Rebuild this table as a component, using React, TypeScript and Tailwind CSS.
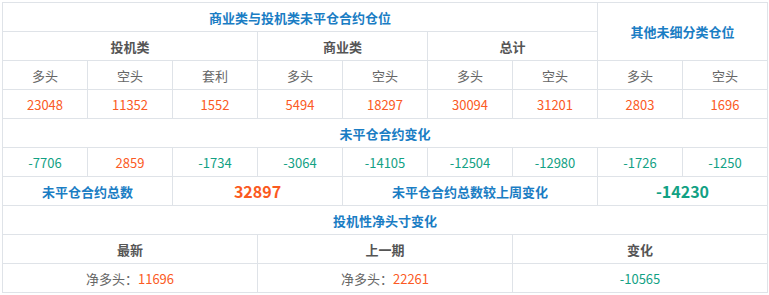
import React from "react";

const font = { fontFamily: '"Microsoft YaHei", "Noto Sans CJK SC", "Noto Sans", sans-serif' };

function Cell({ className = "", children }: { className?: string; children?: React.ReactNode }) {
  return (
    <div className={`flex items-center justify-center bg-white text-[13px] leading-none ${className}`}>
      {children}
    </div>
  );
}

const HEAD = "bg-[#f5f8fd]";
const BLUE = "text-[#1a7dc4] font-bold";
const GRAY_B = "text-[#555] font-bold";
const GRAY = "text-[#666]";
const RED = "text-[#fb5a24]";
const GREEN = "text-[#12a184]";

export default function App() {
  const sub = ["多头", "空头", "套利", "多头", "空头", "多头", "空头", "多头", "空头"];
  const vals = ["23048", "11352", "1552", "5494", "18297", "30094", "31201", "2803", "1696"];
  const chg = ["-7706", "2859", "-1734", "-3064", "-14105", "-12504", "-12980", "-1726", "-1250"];
  return (
    <div className="bg-white w-[769px] h-[295px] pl-[2px] pt-[2px]" style={font}>
      <div className="grid grid-cols-[repeat(9,84px)] grid-rows-[repeat(10,28px)] gap-px bg-[#dfe3e8] border border-[#dfe3e8] w-[766px]">
        <Cell className={`col-span-7 ${HEAD} ${BLUE}`}>商业类与投机类未平仓合约仓位</Cell>
        <Cell className={`col-span-2 row-span-2 ${HEAD} ${BLUE}`}>其他未细分类仓位</Cell>
        <Cell className={`col-span-3 ${HEAD} ${GRAY_B}`}>投机类</Cell>
        <Cell className={`col-span-2 ${HEAD} ${GRAY_B}`}>商业类</Cell>
        <Cell className={`col-span-2 ${HEAD} ${GRAY_B}`}>总计</Cell>
        {sub.map((s, i) => (
          <Cell key={"s" + i} className={GRAY}>{s}</Cell>
        ))}
        {vals.map((v, i) => (
          <Cell key={"v" + i} className={RED}>{v}</Cell>
        ))}
        <Cell className={`col-span-9 ${HEAD} ${BLUE}`}>未平仓合约变化</Cell>
        {chg.map((v, i) => (
          <Cell key={"c" + i} className={v.startsWith("-") ? GREEN : RED}>{v}</Cell>
        ))}
        <Cell className={`col-span-2 ${BLUE}`}>未平仓合约总数</Cell>
        <Cell className={`col-span-2 text-[16px] font-bold text-[#fb5a1e]`}>32897</Cell>
        <Cell className={`col-span-3 ${BLUE}`}>未平仓合约总数较上周变化</Cell>
        <Cell className={`col-span-2 text-[16px] font-bold text-[#12a184]`}>-14230</Cell>
        <Cell className={`col-span-9 ${HEAD} ${BLUE}`}>投机性净头寸变化</Cell>
        <Cell className={`col-span-3 ${GRAY_B}`}>最新</Cell>
        <Cell className={`col-span-3 ${GRAY_B}`}>上一期</Cell>
        <Cell className={`col-span-3 ${GRAY_B}`}>变化</Cell>
        <Cell className={`col-span-3 ${GRAY}`}>
          净多头：<span className={RED}>11696</span>
        </Cell>
        <Cell className={`col-span-3 ${GRAY}`}>
          净多头：<span className={RED}>22261</span>
        </Cell>
        <Cell className={`col-span-3 ${GREEN}`}>-10565</Cell>
      </div>
    </div>
  );
}
